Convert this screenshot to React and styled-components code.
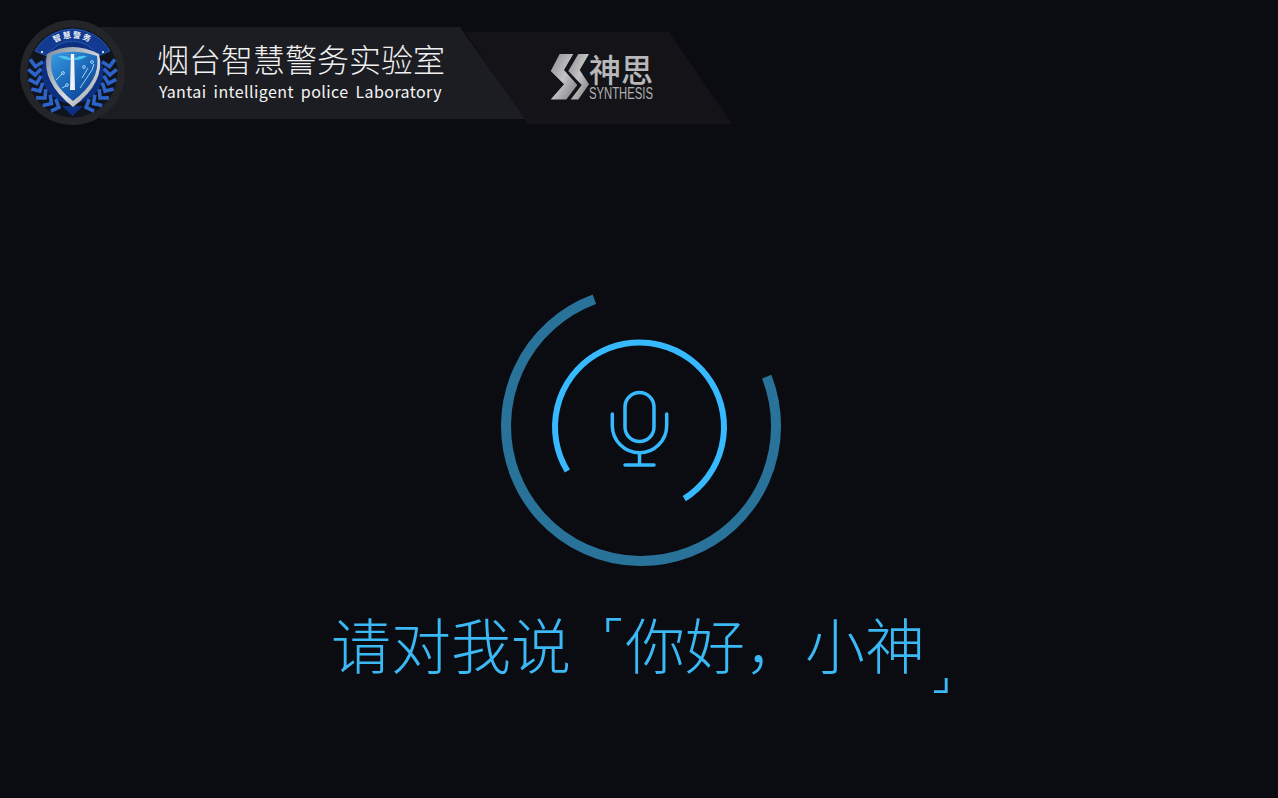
import styled, { createGlobalStyle } from "styled-components";

const GlobalStyle = createGlobalStyle`
  html, body {
    margin: 0;
    padding: 0;
    background: #0a0c11;
  }
`;

const Page = styled.div`
  width: 1278px;
  height: 798px;
  overflow: hidden;
  background: #0a0c11;
  font-family: "Noto Sans CJK SC", "Noto Sans", sans-serif;
`;

/* header ribbon */

const Header = styled.header`
  display: flex;
  align-items: flex-start;
  padding: 20px 0 0 20px;
`;
const BadgeIcon = styled.svg`
  flex: none;
  width: 105px;
  height: 105px;
  position: relative;
  z-index: 2;
`;
const TitlePanel = styled.div`
  flex: none;
  position: relative;
  z-index: 1;
  box-sizing: border-box;
  width: 425px;
  height: 92px;
  margin: 7px 0 0 -25px;
  padding: 10px 0 0 58px;
  background: #1c1d22;
  clip-path: polygon(0 0, 360px 0, 100% 100%, 0 100%);
`;
const Title = styled.h1`
  margin: 0 0 0 -1px;
  font-size: 32px;
  line-height: 42px;
  font-weight: 300;
  color: #f0f0f0;
  white-space: nowrap;
`;
const Subtitle = styled.p`
  margin: 0 0 0 1px;
  font-size: 16px;
  line-height: 24px;
  letter-spacing: 0.41px;
  word-spacing: 3px;
  color: #f4f4f4;
  white-space: nowrap;
`;
const BrandPanel = styled.div`
  flex: none;
  box-sizing: border-box;
  display: flex;
  align-items: center;
  width: 267px;
  height: 92px;
  margin: 12px 0 0 -60px;
  padding: 0 0 0 85px;
  background: #141418;
  clip-path: polygon(0 0, 204px 0, 100% 100%, 62px 100%);
`;
const BrandLogo = styled.svg`
  flex: none;
  width: 104px;
  height: 46px;
  margin-top: -2px;
`;

/* voice prompt */

const Main = styled.main`
  display: flex;
  flex-direction: column;
  align-items: center;
  padding-top: 157px;
`;
const Rings = styled.svg`
  display: block;
  width: 290px;
  height: 290px;
`;
const Prompt = styled.p`
  margin: 28px 0 0;
  font-size: 60px;
  line-height: 86px;
  font-weight: 300;
  color: #3ab9f5;
  white-space: nowrap;
`;
/* only the corner of the bracket glyph shows, the reference draws them small */
const OpenBracket = styled.span`
  display: inline-block;
  width: 54px;
  transform: translateX(-4px);
  clip-path: inset(0 0 54px 0);
`;
const CloseBracket = styled.span`
  display: inline-block;
  width: 22px;
  transform: translate(2px, 19px);
  clip-path: inset(59px -30px 0 7px);
`;

const laurelAngles = [-10, 3, 16, 29, 42, 55, 68];

function Laurel() {
  return (
    <g fill="none" stroke="#2c63c6" strokeWidth="3.6">
      {laurelAngles.map((angle) => (
        <path
          key={angle}
          d="M8.5 47 L15 53 L21.5 47"
          transform={`rotate(${-angle} 52.5 52.5)`}
        />
      ))}
    </g>
  );
}

function Badge() {
  return (
    <BadgeIcon viewBox="0 0 105 105">
      <defs>
        <linearGradient id="shieldFill" x1="0" y1="0" x2="0.8" y2="1">
          <stop offset="0" stopColor="#3a9ce4" />
          <stop offset="0.55" stopColor="#1a68b8" />
          <stop offset="1" stopColor="#0e3f92" />
        </linearGradient>
        <linearGradient id="shieldEdge" x1="0" y1="0" x2="1" y2="1">
          <stop offset="0" stopColor="#7f8a98" />
          <stop offset="0.6" stopColor="#d9dce0" />
          <stop offset="1" stopColor="#8a8d93" />
        </linearGradient>
        <path id="badgeArc" d="M19 46 A34 34 0 0 1 86 46" />
      </defs>
      <circle cx="52.5" cy="52.5" r="52.5" fill="#242529" />
      <circle cx="52.5" cy="52.5" r="45" fill="#10141f" />
      <circle cx="52.5" cy="52.5" r="31" fill="#0d2f80" />
      <path d="M15 31 A43 43 0 0 1 90 31 L78 36 A29.5 29.5 0 0 0 27 36 Z" fill="#123a90" stroke="#2f66c4" strokeWidth="0.8" />
      <text fontSize="8" fill="#eef2f8" fontWeight="700" letterSpacing="1.4">
        <textPath href="#badgeArc" startOffset="50%" textAnchor="middle">
          智慧警务
        </textPath>
      </text>
      <circle cx="22" cy="32" r="1.1" fill="#fff" />
      <circle cx="83" cy="32" r="1.1" fill="#fff" />
      <Laurel />
      <g transform="translate(105 0) scale(-1 1)">
        <Laurel />
      </g>
      <path d="M42 86 H63 L52.5 96 Z" fill="#0d2f80" />
      <path d="M27 34 Q52 20 79 34 Q86 62 53 87 Q21 62 27 34 Z" fill="url(#shieldEdge)" />
      <path d="M32 35 Q54 28 77 36 Q81 60 53 81 Q26 60 32 35 Z" fill="url(#shieldFill)" />
      <path d="M38 36 Q45 35 50 38 H55 Q60 35 67 36 Q62 40 55 40 H50 Q44 40 38 36 Z" fill="#4cc4ee" />
      <path d="M50 70 L50.8 38 H54.2 L55 70 Z" fill="#f0f2f6" />
      <path d="M50.8 34 H54.2 V38 H50.8 Z" fill="#fff" />
      <g fill="none" stroke="#b6dcf4" strokeWidth="0.9">
        <path d="M36 60 L42 54 M60 68 L72 50 L74 44 M62 58 L68 48 M42 68 L46 66" />
        <circle cx="43" cy="53" r="1.4" />
        <circle cx="47" cy="65" r="1.4" />
        <circle cx="64" cy="47" r="1.4" />
        <circle cx="72" cy="42" r="1.4" />
      </g>
    </BadgeIcon>
  );
}

function Brand() {
  return (
    <BrandLogo viewBox="0 0 104 46">
      <defs>
        <linearGradient id="brandMetal" x1="0" y1="0" x2="1" y2="1">
          <stop offset="0" stopColor="#8a8a8c" />
          <stop offset="0.5" stopColor="#c4c4c6" />
          <stop offset="1" stopColor="#77777a" />
        </linearGradient>
      </defs>
      <path d="M9.7 0 H23.3 L14 16 L27.3 31 L16.3 45.5 H0.7 L14 30.3 L0.7 17 Z" fill="url(#brandMetal)" />
      <path d="M28.3 0 H39 L29.7 16 L39 30.3 L28.3 45.5 H20.7 L31.7 31 L18.3 17 Z" fill="url(#brandMetal)" />
      <text x="39" y="28" fontSize="32" fontWeight="500" fill="#b8b8ba" textLength="64" lengthAdjust="spacingAndGlyphs">
        神思
      </text>
      <text x="39" y="45" fontSize="16" fontFamily="Liberation Sans, sans-serif" fill="#b0b0b2" textLength="64" lengthAdjust="spacingAndGlyphs">
        SYNTHESIS
      </text>
    </BrandLogo>
  );
}

function VoiceRings() {
  return (
    <Rings viewBox="494 282 290 290">
      <path
        d="M594.4 299.3 A135 135 0 1 0 766.7 376.7"
        fill="none"
        stroke="#297299"
        strokeWidth="10"
      />
      <path
        d="M567.4 471 A84.5 84.5 0 1 1 684.3 498.6"
        fill="none"
        stroke="#36b9ff"
        strokeWidth="6"
      />
      <g fill="none" stroke="#36b9ff" strokeWidth="3.5" strokeLinecap="round">
        <rect x="625" y="392.5" width="29" height="49" rx="14.5" />
        <path d="M612.3 414 V425.5 A27.2 27.2 0 0 0 666.7 425.5 V414" />
        <path d="M639.5 453 V465 M625 465 H654" />
      </g>
    </Rings>
  );
}

export default function App() {
  return (
    <Page>
      <GlobalStyle />
      <Header>
        <Badge />
        <TitlePanel>
          <Title>烟台智慧警务实验室</Title>
          <Subtitle>Yantai intelligent police Laboratory</Subtitle>
        </TitlePanel>
        <BrandPanel>
          <Brand />
        </BrandPanel>
      </Header>
      <Main>
        <VoiceRings />
        <Prompt>
          请对我说<OpenBracket>「</OpenBracket>你好，小神<CloseBracket>」</CloseBracket>
        </Prompt>
      </Main>
    </Page>
  );
}
